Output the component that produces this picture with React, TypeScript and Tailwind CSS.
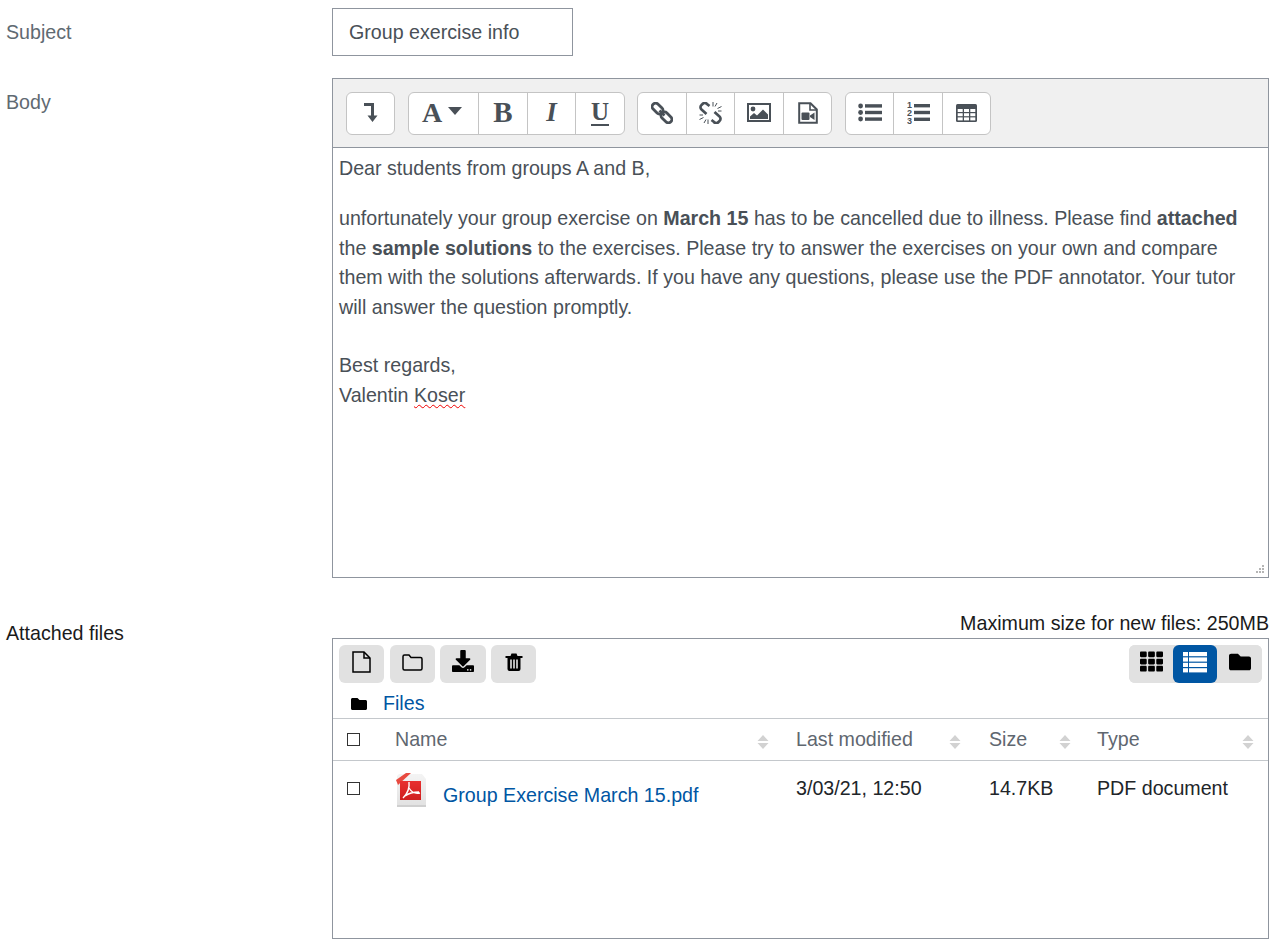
import React from "react";
import { FaDownload, FaTh, FaFolder } from "react-icons/fa";

const DARK = "#495057";

function Seg({ children, last, w }: { children: React.ReactNode; last?: boolean; w: string }) {
  return <div className={`${w} h-full flex items-center justify-center pb-[2px] text-[#495057] ${last ? "" : "border-r border-[#c4c4c4]"}`}>{children}</div>;
}

function Group({ children }: { children: React.ReactNode }) {
  return <div className="h-[43px] flex bg-white border border-[#c4c4c4] rounded-[6px]">{children}</div>;
}

function Sort({ className }: { className: string }) {
  return (
    <svg width="12" height="16" viewBox="0 0 12 16" className={className}>
      <path d="M6 1 L11.5 7 H0.5 Z M0.5 9 H11.5 L6 15 Z" fill="#d2d2d2" />
    </svg>
  );
}

function Check({ className }: { className?: string }) {
  return <div className={`w-[13px] h-[13px] border border-[#333] bg-white ${className ?? ""}`} />;
}

function ToolBtn({ children, w, active }: { children: React.ReactNode; w: string; active?: boolean }) {
  return <div className={`${w} h-[38px] flex items-center justify-center pb-[4px] rounded-[6px] ${active ? "bg-[#0056a3] text-white" : "bg-[#e1e1e1] text-black"}`}>{children}</div>;
}

function LevelDown() {
  return (
    <svg width="14" height="19" viewBox="0 0 14 19">
      <path d="M0 0 H10 V12.5 H13.5 L8.5 19 L3.5 12.5 H7 V3 H0 Z" fill={DARK} />
    </svg>
  );
}

function Caret() {
  return (
    <svg width="14" height="8" viewBox="0 0 14 8" className="mt-[-3px]">
      <path d="M0 0 H14 L7 8 Z" fill={DARK} />
    </svg>
  );
}

function LinkIcon() {
  return (
    <svg width="22" height="22" viewBox="0 0 22 22">
      <g transform="rotate(45 11 11)" fill="none" stroke={DARK} strokeWidth="2.8">
        <rect x="-1.5" y="7.5" width="12.5" height="7" rx="3.5" />
        <rect x="11" y="7.5" width="12.5" height="7" rx="3.5" />
        <path d="M7.5 11 H14.5" />
      </g>
    </svg>
  );
}

function UnlinkIcon() {
  return (
    <svg width="23" height="22" viewBox="0 0 23 22">
      <g fill="none" stroke={DARK} strokeWidth="2.7">
        <path d="M10.5 4 L8 2 a3 3 0 0 0 -4.5 0 L2.5 3 a3 3 0 0 0 0 4.5 L7.5 12" />
        <path d="M12.5 18 L15 20 a3 3 0 0 0 4.5 0 L20.5 19 a3 3 0 0 0 0 -4.5 L15.5 10" />
      </g>
      <path d="M14 0 V4.5 M18 1 L16 4.5 M22.5 4.5 L18.5 6.5 M22.5 9 H19 M9 22 V17.5 M5 21 L7 17.5 M0.5 17.5 L4.5 15.5 M0.5 13 H4" stroke={DARK} strokeWidth="1" fill="none" />
    </svg>
  );
}

function ImageIcon() {
  return (
    <svg width="24" height="19" viewBox="0 0 24 19">
      <rect x="1" y="1" width="22" height="17" fill="#fff" stroke={DARK} strokeWidth="2" />
      <circle cx="6" cy="6" r="2.4" fill={DARK} />
      <path d="M3 16 V13.5 L7 10 L10 12.5 L16 6.5 L21 11.5 V16 Z" fill={DARK} />
    </svg>
  );
}

function VideoFile() {
  return (
    <svg width="20" height="22" viewBox="0 0 20 22">
      <path d="M1.2 1.2 H12.5 L18.8 7.5 V20.8 H1.2 Z" fill="#fff" stroke={DARK} strokeWidth="2" />
      <path d="M12 1.5 V8 H18.5" fill="none" stroke={DARK} strokeWidth="1.6" />
      <rect x="3.5" y="10.5" width="8" height="7.5" rx="1" fill={DARK} />
      <path d="M12 13.5 L16.5 10.5 V18 L12 15 Z" fill={DARK} />
    </svg>
  );
}

function UlIcon() {
  return (
    <svg width="24" height="19" viewBox="0 0 24 19">
      <g fill={DARK}>
        <circle cx="2.6" cy="3" r="2.4" />
        <circle cx="2.6" cy="9.5" r="2.4" />
        <circle cx="2.6" cy="16" r="2.4" />
        <rect x="7" y="1.2" width="17" height="3.4" />
        <rect x="7" y="7.8" width="17" height="3.4" />
        <rect x="7" y="14.4" width="17" height="3.4" />
      </g>
    </svg>
  );
}

function OlIcon() {
  return (
    <svg width="23" height="24" viewBox="0 0 23 24">
      <g fill={DARK}>
        <text x="0" y="7" fontSize="9" fontWeight="700" fontFamily="Liberation Sans">1</text>
        <text x="0" y="15" fontSize="9" fontWeight="700" fontFamily="Liberation Sans">2</text>
        <text x="0" y="23" fontSize="9" fontWeight="700" fontFamily="Liberation Sans">3</text>
        <rect x="7" y="3" width="16" height="3.4" />
        <rect x="7" y="9.8" width="16" height="3.4" />
        <rect x="7" y="16.6" width="16" height="3.4" />
      </g>
    </svg>
  );
}

function TableIcon() {
  return (
    <svg width="21" height="18" viewBox="0 0 21 18">
      <rect width="21" height="18" rx="1.5" fill={DARK} />
      <g fill="#fff">
        <rect x="1.7" y="5" width="5" height="3" />
        <rect x="8" y="5" width="5" height="3" />
        <rect x="14.3" y="5" width="5" height="3" />
        <rect x="1.7" y="9.2" width="5" height="3" />
        <rect x="8" y="9.2" width="5" height="3" />
        <rect x="14.3" y="9.2" width="5" height="3" />
        <rect x="1.7" y="13.4" width="5" height="3" />
        <rect x="8" y="13.4" width="5" height="3" />
        <rect x="14.3" y="13.4" width="5" height="3" />
      </g>
    </svg>
  );
}

function FileO() {
  return (
    <svg width="19" height="22" viewBox="0 0 19 22" fill="none" stroke="#000" strokeWidth="1.5">
      <path d="M1 1 H12 L18 7 V21 H1 Z" />
      <path d="M12 1 V7 H18" />
    </svg>
  );
}

function FolderO() {
  return (
    <svg width="21" height="17" viewBox="0 0 21 17" fill="none" stroke="#000" strokeWidth="1.5">
      <path d="M2.5 1 H7 L9 3.5 H18.5 a1.5 1.5 0 0 1 1.5 1.5 V14.5 a1.5 1.5 0 0 1 -1.5 1.5 H2.5 a1.5 1.5 0 0 1 -1.5 -1.5 V2.5 a1.5 1.5 0 0 1 1.5 -1.5 Z" />
    </svg>
  );
}

function Trash() {
  return (
    <svg width="18" height="18" viewBox="0 0 18 18">
      <path d="M0.5 3 H5.5 L6.5 0.5 H11.5 L12.5 3 H17.5 V5 H0.5 Z" fill="#000" />
      <path d="M2.5 5 H15.5 V16 a2 2 0 0 1 -2 2 H4.5 a2 2 0 0 1 -2 -2 Z" fill="#000" />
      <g fill="#e1e1e1">
        <rect x="5.2" y="6.5" width="1.6" height="9" />
        <rect x="8.2" y="6.5" width="1.6" height="9" />
        <rect x="11.2" y="6.5" width="1.6" height="9" />
      </g>
    </svg>
  );
}

function ListActive() {
  return (
    <svg width="24" height="21" viewBox="0 0 24 21" fill="#fff">
      <rect x="0" y="0" width="5" height="4.2" />
      <rect x="6" y="0" width="18" height="4.2" />
      <rect x="0" y="5.4" width="5" height="4.2" />
      <rect x="6" y="5.4" width="18" height="4.2" />
      <rect x="0" y="10.8" width="5" height="4.2" />
      <rect x="6" y="10.8" width="18" height="4.2" />
      <rect x="0" y="16.2" width="5" height="4.2" />
      <rect x="6" y="16.2" width="18" height="4.2" />
    </svg>
  );
}

function PdfIcon() {
  return (
    <svg width="32" height="36" viewBox="0 0 32 36" className="shrink-0 blur-[0.5px]">
      <defs>
        <linearGradient id="pg" x1="0" y1="0" x2="0" y2="1">
          <stop offset="0" stopColor="#f4f4f4" />
          <stop offset="1" stopColor="#e2e2e2" />
        </linearGradient>
        <linearGradient id="rg" x1="0" y1="0" x2="0" y2="1">
          <stop offset="0" stopColor="#e83030" />
          <stop offset="1" stopColor="#cf1f1f" />
        </linearGradient>
      </defs>
      <path d="M4 1 H27 L31 6 V32 H2 V3 Z" fill="url(#pg)" />
      <rect x="2" y="32" width="29" height="2" fill="#cfcfcf" />
      <path d="M1 7 L11 0 H16 L3 12 Z" fill="#e84a40" />
      <rect x="5" y="8" width="21" height="19" fill="url(#rg)" />
      <path d="M14 9 C15 17 11 22 8 25 M14 15 C17 20 21 21 25 20 M10 23 C14 20 19 19 24 19" stroke="#fff" strokeWidth="1.4" fill="none" />
    </svg>
  );
}

export default function App() {
  return (
    <div className="w-[1279px] h-[949px] bg-white overflow-hidden pt-[8px] pl-[6px] pr-[10px] font-['Liberation_Sans',Arial,sans-serif] text-[19.65px] leading-[29.5px] text-[#495057]">
      <div className="flex">
        <div className="w-[326px] shrink-0 pt-[10px] text-[#5f6a72]">Subject</div>
        <div className="w-[241px] h-[48px] border border-[#8f959e] flex items-center pl-[16px] pt-[1px] text-[#495057]">Group exercise info</div>
      </div>

      <div className="flex mt-[22px]">
        <div className="w-[326px] shrink-0 pt-[10px] text-[#5f6a72]">Body</div>
        <div className="w-[937px] h-[500px] border border-[#8f959e] flex flex-col relative">
          <div className="h-[69px] shrink-0 bg-[#f0f0f0] border-b border-[#8f959e] flex items-start pt-[13px] pl-[13px]">
            <Group>
              <Seg last w="w-[47px]"><LevelDown /></Seg>
            </Group>
            <div className="w-[13px]" />
            <Group>
              <Seg w="w-[70px]">
                <span className="font-['Liberation_Serif',serif] font-bold text-[28px] leading-none -ml-[3px] mr-[6px]">A</span>
                <Caret />
              </Seg>
              <Seg w="w-[49px]"><span className="font-['Liberation_Serif',serif] font-bold text-[29px] leading-none">B</span></Seg>
              <Seg w="w-[48px]"><span className="font-['Liberation_Serif',serif] font-bold italic text-[27px] leading-none">I</span></Seg>
              <Seg last w="w-[48px]"><span className="font-['Liberation_Serif',serif] font-bold text-[25px] leading-[24px] border-b-2 border-[#495057]">U</span></Seg>
            </Group>
            <div className="w-[12px]" />
            <Group>
              <Seg w="w-[49px]"><LinkIcon /></Seg>
              <Seg w="w-[48px]"><UnlinkIcon /></Seg>
              <Seg w="w-[49px]"><ImageIcon /></Seg>
              <Seg last w="w-[47px]"><VideoFile /></Seg>
            </Group>
            <div className="w-[13px]" />
            <Group>
              <Seg w="w-[48px]"><UlIcon /></Seg>
              <Seg w="w-[49px]"><OlIcon /></Seg>
              <Seg last w="w-[47px]"><TableIcon /></Seg>
            </Group>
          </div>
          <div className="flex-1 pl-[6px] pr-[12px] pt-[6px]">
            <p>Dear students from groups A and B,</p>
            <p className="mt-[20.5px] w-[905px] leading-[29.7px]">
              unfortunately your group exercise on <b>March 15</b> has to be cancelled due to illness. Please find <b>attached</b> the <b>sample solutions</b> to the exercises. Please try to answer the exercises on your own and compare them with the solutions afterwards. If you have any questions, please use the PDF annotator. Your tutor will answer the question promptly.
            </p>
            <p className="mt-[28px]">Best regards,</p>
            <p className="mt-[0.5px]">Valentin <span className="underline decoration-wavy decoration-[#f00000] decoration-1 underline-offset-2">Koser</span></p>
          </div>
          <svg width="10" height="10" viewBox="0 0 10 10" className="absolute right-[2px] bottom-[2px]">
            <path d="M6 0h2v2H6zM3 3h2v2H3zM6 3h2v2H6zM0 6h2v2H0zM3 6h2v2H3zM6 6h2v2H6z" fill="#b5b5b5" />
          </svg>
        </div>
      </div>

      <div className="flex mt-[29px]">
        <div className="w-[326px] shrink-0 pt-[12px] text-[#1a1a1a]">Attached files</div>
        <div className="w-[937px]">
          <div className="text-right text-[#1a1a1a] h-[31px] pt-[2px]">Maximum size for new files: 250MB</div>
          <div className="h-[301px] border border-[#8f959e] flex flex-col">
            <div className="flex justify-between pt-[6px] pl-[6px] pr-[6px]">
              <div className="flex">
                <ToolBtn w="w-[45px]"><FileO /></ToolBtn>
                <div className="w-[6px]" />
                <ToolBtn w="w-[45px]"><FolderO /></ToolBtn>
                <div className="w-[5px]" />
                <ToolBtn w="w-[46px]"><FaDownload size={22} className="-mt-[2px]" /></ToolBtn>
                <div className="w-[5px]" />
                <ToolBtn w="w-[45px]"><Trash /></ToolBtn>
              </div>
              <div className="flex bg-[#e1e1e1] rounded-[6px]">
                <ToolBtn w="w-[44px]"><FaTh size={23} className="-mt-[1px]" /></ToolBtn>
                <ToolBtn w="w-[44px]" active><ListActive /></ToolBtn>
                <ToolBtn w="w-[45px]"><FaFolder size={22} className="-mt-[1px]" /></ToolBtn>
              </div>
            </div>
            <div className="h-[35px] flex items-center pl-[18px] pt-[7px]">
              <FaFolder size={16} className="text-black" />
              <span className="ml-[16px] text-[#0056a3]">Files</span>
            </div>
            <div className="h-[41px] grid grid-cols-[62px_401px_193px_108px_1fr] border-y border-[#c4c8cc] box-content items-center text-[#5f6770]">
              <div className="pl-[14px]"><Check className="mt-[-1px]" /></div>
              <div className="flex justify-between items-center pr-[27px]"><span>Name</span><Sort className="mt-[4px]" /></div>
              <div className="flex justify-between items-center pr-[28px]"><span>Last modified</span><Sort className="mt-[4px]" /></div>
              <div className="flex justify-between items-center pr-[26px]"><span>Size</span><Sort className="mt-[4px]" /></div>
              <div className="flex justify-between items-center pr-[14px]"><span>Type</span><Sort className="mt-[4px]" /></div>
            </div>
            <div className="grid grid-cols-[62px_401px_193px_108px_1fr] text-[#212529] pt-[12px]">
              <div className="pl-[14px] pt-[9px]"><Check /></div>
              <div className="flex items-start">
                <PdfIcon />
                <span className="ml-[16px] mt-[8px] text-[#0056a3]">Group Exercise March 15.pdf</span>
              </div>
              <div className="pt-[1px]">3/03/21, 12:50</div>
              <div className="pt-[1px]">14.7KB</div>
              <div className="pt-[1px]">PDF document</div>
            </div>
          </div>
        </div>
      </div>
    </div>
  );
}
